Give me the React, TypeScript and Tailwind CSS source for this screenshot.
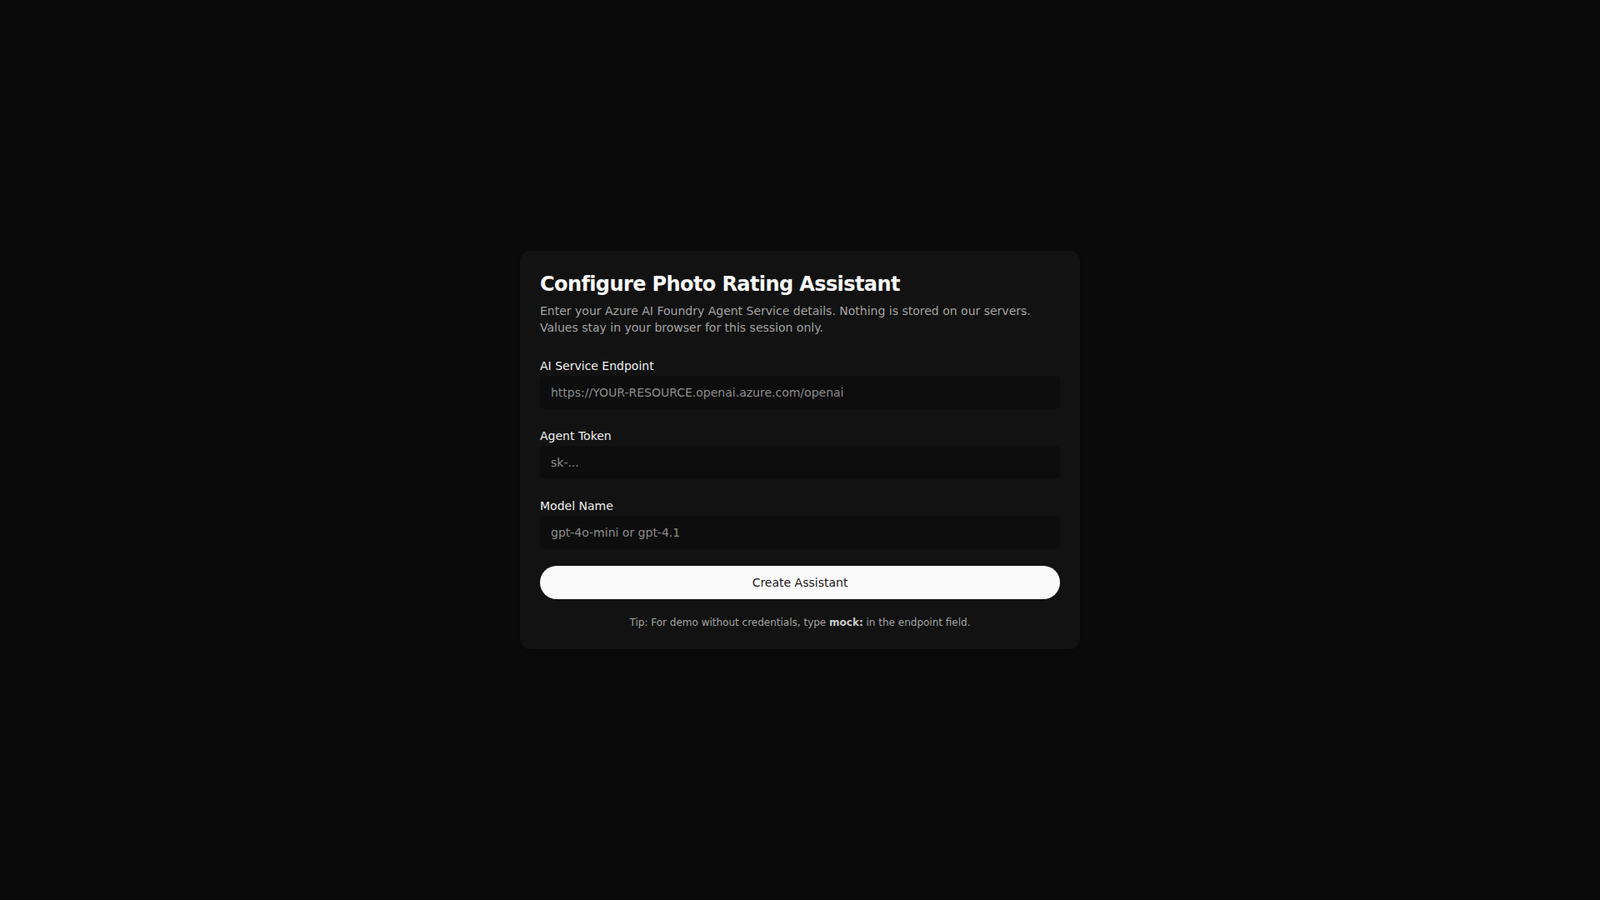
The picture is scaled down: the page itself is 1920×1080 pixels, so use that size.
import React from "react";

function Field({ label, placeholder }: { label: string; placeholder: string }) {
  return (
    <div>
      <div>
        <label className="text-sm text-[#f0f0f0]">{label}</label>
      </div>
      <input
        className="block h-10 w-full rounded-md border border-[#0d0d0d] bg-[#0d0d0d] px-3 text-sm text-[#e5e5e5] placeholder:text-[#8c8c8c] outline-none"
        placeholder={placeholder}
      />
    </div>
  );
}

export default function App() {
  return (
    <div className="flex min-h-screen items-center justify-center bg-[#0a0a0a] font-['DejaVu_Sans',sans-serif]">
      <div className="w-[672px] rounded-xl bg-[#121212] p-6 shadow-lg">
        <h1 className="text-2xl font-bold tracking-tight text-[#fafafa]">
          Configure Photo Rating Assistant
        </h1>
        <p className="mt-1.5 text-sm leading-5 text-[#a3a3a3]">
          Enter your Azure AI Foundry Agent Service details. Nothing is stored on our servers.
          <br />
          Values stay in your browser for this session only.
        </p>
        <div className="mt-6 flex flex-col gap-5">
          <Field label="AI Service Endpoint" placeholder="https://YOUR-RESOURCE.openai.azure.com/openai" />
          <Field label="Agent Token" placeholder="sk-..." />
          <Field label="Model Name" placeholder="gpt-4o-mini or gpt-4.1" />
          <button className="h-10 w-full rounded-full bg-[#fafafa] text-sm text-[#171717]">
            Create Assistant
          </button>
        </div>
        <p className="mt-5 text-center text-xs text-[#a3a3a3]">
          Tip: For demo without credentials, type <span className="font-bold text-[#c8c8c8]">mock:</span> in the endpoint field.
        </p>
      </div>
    </div>
  );
}
